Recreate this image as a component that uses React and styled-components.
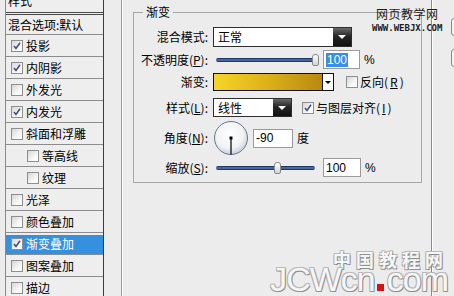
import styled, { createGlobalStyle } from "styled-components";

const Global = createGlobalStyle`
  html, body { margin: 0; padding: 0; background: #ececec; }
  body {
    font-family: "Noto Sans CJK SC", "Liberation Sans", sans-serif;
    font-size: 12px;
    color: #000;
  }
`;

const Page = styled.div`
  position: relative;
  display: flex;
  width: 454px;
  height: 296px;
  overflow: hidden;
`;

/* ---------- left style list ---------- */
const Sidebar = styled.div`
  flex: none;
  width: 104px;
  padding-left: 5px;
  box-sizing: border-box;
`;

const List = styled.div`
  height: 100%;
  border-left: 1px solid #8a8a8a;
  border-right: 1px solid #3c3c3c;
  background: #eeeeee;
`;

const ListHead = styled.div`
  height: 12px;
  overflow: hidden;
  border-bottom: 3px double #474747;
  padding-left: 2px;
  span {
    display: block;
    line-height: 14px;
    margin-top: -6px;
  }
`;

const ListRow = styled.div`
  display: flex;
  align-items: center;
  gap: 3px;
  height: ${(p) => p.$h || 22}px;
  box-sizing: border-box;
  border-bottom: 1px solid #8c8c8c;
  padding-left: ${(p) => p.$pad}px;
  line-height: 14px;
  white-space: nowrap;
  color: ${(p) => (p.$active ? "#fff" : "#000")};
  background: ${(p) =>
    p.$active ? "linear-gradient(#eeeeee 2px, #3590df 2px)" : "transparent"};
`;

/* ---------- checkbox ---------- */
const Box = styled.span`
  flex: none;
  width: 12px;
  height: 12px;
  box-sizing: border-box;
  border: 1px solid #8e8e8e;
  background: linear-gradient(135deg, #d6d6d6, #fbfbfb 70%);
  display: inline-flex;
  align-items: center;
  justify-content: center;
`;

function Check({ on }) {
  return (
    <Box>
      {on && (
        <svg width="8" height="8" viewBox="0 0 8 8">
          <path d="M1 4 L3 6.5 L7 0.8" fill="none" stroke="#434d8c" strokeWidth="1.6" />
        </svg>
      )}
    </Box>
  );
}

/* ---------- main area ---------- */
const Main = styled.div`
  flex: none;
  display: flex;
  padding-left: 17px;
`;

const Outer = styled.div`
  width: 312px;
  height: 100%;
  box-sizing: border-box;
  border-left: 1px solid #9c9c9c;
  border-right: 1px solid #ffffff;
  box-shadow: inset 1px 0 #ffffff, inset -1px 0 #8a8a8a;
  padding: 0 10px 0 11px;
`;

const Group = styled.fieldset`
  margin: 5px 0 0;
  padding: 0 0 6px;
  border: 1px solid #a6a6a6;
  min-width: 0;
`;

const Legend = styled.legend`
  margin-left: 9px;
  padding: 0 3px;
  line-height: 14px;
`;

const Row = styled.div`
  display: grid;
  grid-template-columns: 74px auto;
  column-gap: 5px;
  align-items: center;
  height: ${(p) => p.$h}px;
  margin-top: ${(p) => p.$top}px;
  line-height: 14px;
`;

const Label = styled.span`
  text-align: right;
  white-space: nowrap;
`;

const Controls = styled.div`
  display: flex;
  align-items: center;
  height: 100%;
`;

const Select = styled.div`
  display: flex;
  width: ${(p) => p.$w}px;
  height: 100%;
  box-sizing: border-box;
  border: 1px solid #2e2e2e;
  background: #fff;
`;

const SelectText = styled.span`
  flex: 1;
  padding-left: 4px;
  display: flex;
  align-items: center;
`;

const SelectArrow = styled.span`
  flex: none;
  width: 18px;
  display: flex;
  align-items: center;
  justify-content: center;
  background: linear-gradient(#6a6a6a, #262626 45%, #111);
  &::after {
    content: "";
    border-left: 4px solid transparent;
    border-right: 4px solid transparent;
    border-top: 4px solid #fff;
  }
`;

const Slider = styled.div`
  position: relative;
  flex: none;
  width: 107px;
  height: 100%;
  &::before {
    content: "";
    position: absolute;
    left: 3px;
    right: 5px;
    top: 50%;
    height: 4px;
    margin-top: -2px;
    border-radius: 2px;
    background: linear-gradient(#0d2450, #5a7db0 50%, #0d2450);
  }
`;

const Thumb = styled.span`
  position: absolute;
  top: 50%;
  margin-top: -6px;
  left: ${(p) => p.$at}px;
  width: 7px;
  height: 12px;
  box-sizing: border-box;
  border: 1px solid #8a8a8a;
  border-radius: 3px 3px 2px 2px;
  background: linear-gradient(#ffffff, #d4d4d4);
`;

const Field = styled.span`
  flex: none;
  display: flex;
  align-items: center;
  width: ${(p) => p.$w}px;
  height: 19px;
  margin-left: ${(p) => p.$ml || 0}px;
  box-sizing: border-box;
  border: 1px solid #9a9a9a;
  background: #fff;
  padding-left: 2px;
  font-family: "Liberation Sans", sans-serif;
  font-size: 12px;
`;

const Selected = styled.span`
  background: #3a8ee2;
  color: #fff;
  padding: 0 1px;
`;

const Unit = styled.span`
  margin-left: ${(p) => p.$ml || 4}px;
  font-family: ${(p) => (p.$latin ? '"Liberation Sans", sans-serif' : "inherit")};
`;

const Swatch = styled.div`
  display: flex;
  width: 121px;
  height: 100%;
  box-sizing: border-box;
  border: 1px solid #111;
`;

const Ramp = styled.span`
  flex: 1;
  background: linear-gradient(90deg, #f6d52a, #e0b419 45%, #b88a10);
  border-right: 1px solid #111;
`;

const RampArrow = styled.span`
  flex: none;
  width: 10px;
  background: #fff;
  display: flex;
  align-items: center;
  justify-content: center;
  &::after {
    content: "";
    border-left: 3px solid transparent;
    border-right: 3px solid transparent;
    border-top: 3px solid #000;
  }
`;

const Option = styled.label`
  display: flex;
  align-items: center;
  gap: 2px;
  margin-left: ${(p) => p.$ml}px;
  white-space: nowrap;
`;

function Dial() {
  return (
    <svg width="36" height="36" viewBox="0 0 36 36">
      <defs>
        <radialGradient id="dialFill" cx="45%" cy="40%" r="60%">
          <stop offset="0%" stopColor="#ffffff" />
          <stop offset="70%" stopColor="#f0f2f5" />
          <stop offset="100%" stopColor="#c9d0da" />
        </radialGradient>
      </defs>
      <circle cx="18" cy="18" r="16.5" fill="url(#dialFill)" stroke="#66768e" strokeWidth="1" />
      <line x1="18" y1="18" x2="18" y2="34.5" stroke="#000" strokeWidth="1.2" />
      <rect x="16.5" y="16.5" width="3" height="3" fill="#000" />
    </svg>
  );
}

/* ---------- right edge buttons ---------- */
const ButtonColumn = styled.div`
  flex: none;
  display: flex;
  flex-direction: column;
  gap: 13px;
  padding-top: 18px;
  margin-left: 18px;
`;

const EdgeButton = styled.span`
  width: 60px;
  height: 16px;
  border: 1px solid #8a8a8a;
  border-radius: 3px;
  background: #f4f4f4;
`;

/* ---------- watermarks ---------- */
const MarkTop = styled.div`
  position: absolute;
  left: 372px;
  top: 6px;
  display: flex;
  flex-direction: column;
  align-items: center;
  color: #1c1c1c;
`;

const MarkTitle = styled.span`
  font-size: 12px;
  line-height: 15px;
  letter-spacing: 0.5px;
`;

const MarkUrl = styled.span`
  font-family: "DejaVu Sans Mono", monospace;
  font-weight: bold;
  font-size: 9px;
  line-height: 10px;
  margin-top: 2px;
`;

const MarkBottom = styled.div`
  position: absolute;
  left: 262px;
  top: 251px;
  display: flex;
  flex-direction: column;
  align-items: flex-end;
  width: 186px;
  color: #f6f6f6;
  text-shadow: 1px 1px 0 #8d8d8d, -1px -1px 0 #b9b9b9, 1px -1px 0 #b9b9b9, -1px 1px 0 #a6a6a6;
`;

const MarkCn = styled.span`
  font-size: 18px;
  line-height: 16px;
  letter-spacing: 5px;
  font-weight: bold;
`;

const MarkEn = styled.span`
  font-family: "Liberation Sans", sans-serif;
  font-size: 34px;
  line-height: 24px;
  letter-spacing: -1px;
`;

const RedDot = styled.span`
  display: inline-block;
  width: 7px;
  height: 7px;
  margin: 0 3px 0 2px;
  background: #d41414;
  text-shadow: none;
`;

const layers = [
  { name: "投影", on: true },
  { name: "内阴影", on: true },
  { name: "外发光" },
  { name: "内发光", on: true },
  { name: "斜面和浮雕" },
  { name: "等高线", indent: true },
  { name: "纹理", indent: true },
  { name: "光泽" },
  { name: "颜色叠加" },
  { name: "渐变叠加", on: true, active: true },
  { name: "图案叠加" },
  { name: "描边" },
];

export default function App() {
  return (
    <>
      <Global />
      <Page>
        <Sidebar>
          <List>
            <ListHead>
              <span>样式</span>
            </ListHead>
            <ListRow $h={20} $pad={2}>混合选项:默认</ListRow>
            {layers.map((l) => (
              <ListRow key={l.name} $pad={l.indent ? 21 : 5} $active={l.active}>
                <Check on={l.on} />
                {l.name}
              </ListRow>
            ))}
          </List>
        </Sidebar>

        <Main>
          <Outer>
            <Group>
              <Legend>渐变</Legend>
              <Row $top={8} $h={20}>
                <Label>混合模式:</Label>
                <Controls>
                  <Select $w={139}>
                    <SelectText>正常</SelectText>
                    <SelectArrow />
                  </Select>
                </Controls>
              </Row>
              <Row $top={3} $h={18}>
                <Label>
                  不透明度(<u>P</u>):
                </Label>
                <Controls>
                  <Slider>
                    <Thumb $at={99} />
                  </Slider>
                  <Field $w={37} $ml={3}>
                    <Selected>100</Selected>
                  </Field>
                  <Unit $latin>%</Unit>
                </Controls>
              </Row>
              <Row $top={5} $h={18}>
                <Label>渐变:</Label>
                <Controls>
                  <Swatch>
                    <Ramp />
                    <RampArrow />
                  </Swatch>
                  <Option $ml={12}>
                    <Check />
                    反向(<u>R</u>)
                  </Option>
                </Controls>
              </Row>
              <Row $top={7} $h={19}>
                <Label>
                  样式(<u>L</u>):
                </Label>
                <Controls>
                  <Select $w={79}>
                    <SelectText>线性</SelectText>
                    <SelectArrow />
                  </Select>
                  <Option $ml={10}>
                    <Check on />
                    与图层对齐(<u>I</u>)
                  </Option>
                </Controls>
              </Row>
              <Row $top={3} $h={36}>
                <Label>
                  角度(<u>N</u>):
                </Label>
                <Controls>
                  <Dial />
                  <Field $w={40} $ml={4}>
                    -90
                  </Field>
                  <Unit>度</Unit>
                </Controls>
              </Row>
              <Row $top={2} $h={18}>
                <Label>
                  缩放(<u>S</u>):
                </Label>
                <Controls>
                  <Slider>
                    <Thumb $at={61} />
                  </Slider>
                  <Field $w={38} $ml={3}>
                    100
                  </Field>
                  <Unit $latin>%</Unit>
                </Controls>
              </Row>
            </Group>
          </Outer>
          <ButtonColumn>
            <EdgeButton />
            <EdgeButton />
          </ButtonColumn>
        </Main>

        <MarkTop>
          <MarkTitle>网页教学网</MarkTitle>
          <MarkUrl>WWW.WEBJX.COM</MarkUrl>
        </MarkTop>
        <MarkBottom>
          <MarkCn>中国教程网</MarkCn>
          <MarkEn>
            JCWcn<RedDot />com
          </MarkEn>
        </MarkBottom>
      </Page>
    </>
  );
}
